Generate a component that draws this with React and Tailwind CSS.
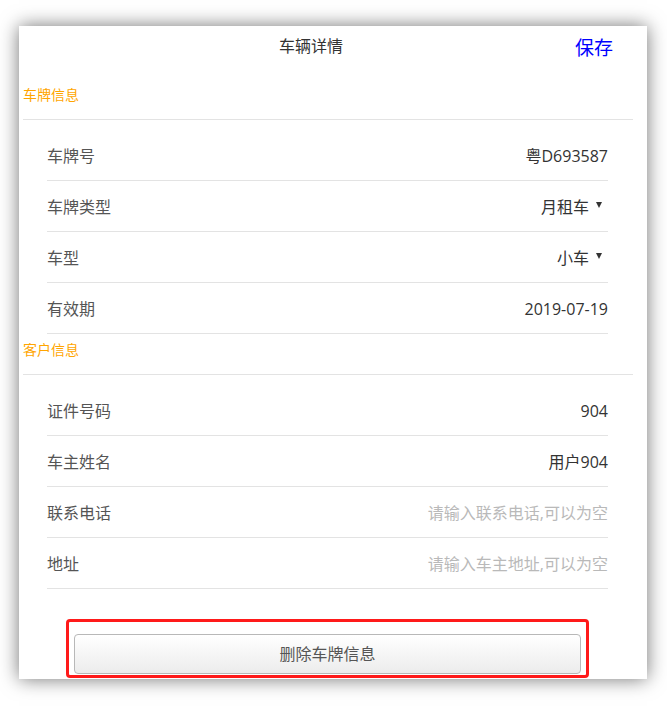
const plateRows = [
  { label: "车牌号", value: "粤D693587" },
  { label: "车牌类型", value: "月租车", select: true },
  { label: "车型", value: "小车", select: true },
  { label: "有效期", value: "2019-07-19" },
];

const ownerRows = [
  { label: "证件号码", value: "904" },
  { label: "车主姓名", value: "用户904" },
  { label: "联系电话", placeholder: "请输入联系电话,可以为空" },
  { label: "地址", placeholder: "请输入车主地址,可以为空" },
];

function Caret() {
  return (
    <svg width="6" height="6" viewBox="0 0 6 6" className="ml-[7px] mr-[6px] -mt-[4px]">
      <path d="M0 0H6L3 6Z" fill="#333" />
    </svg>
  );
}

function Row({ row }) {
  return (
    <div className="h-[51px] pt-[2px] flex items-center justify-between border-b border-[#e3e3e3] text-[16px] leading-[20px]">
      <span className="text-[#555]">{row.label}</span>
      {row.placeholder ? (
        <span className="text-[#b9b9b9]">{row.placeholder}</span>
      ) : (
        <span className="flex items-center text-[#333]">
          {row.value}
          {row.select && <Caret />}
        </span>
      )}
    </div>
  );
}

function Section({ title, rows }) {
  return (
    <div>
      <div className="ml-[4px] mr-[14px] pt-[6px] pb-[14px] border-b border-[#e3e3e3] text-[14px] leading-[20px] text-[#ffa500]">
        {title}
      </div>
      <div className="ml-[28px] mr-[39px] pt-[10px]">
        {rows.map((row) => (
          <Row key={row.label} row={row} />
        ))}
      </div>
    </div>
  );
}

export default function App() {
  return (
    <div
      className="w-[667px] h-[706px] bg-white pt-[26px] pl-[19px]"
      style={{ fontFamily: '"Open Sans", "Noto Sans CJK SC", sans-serif' }}
    >
      <div className="w-[628px] h-[653px] bg-white overflow-hidden shadow-[0_0_18px_rgba(0,0,0,0.55)]">
        {/* Title bar */}
        <div className="h-[53px] flex items-start pt-[10px]">
          <div className="flex-1 pl-[28px] text-center text-[16px] leading-[20px] text-[#333]">
            车辆详情
          </div>
          <button className="mr-[34px] mt-[1px] text-[19px] leading-[22px] text-[#0000ff]">保存</button>
        </div>

        <Section title="车牌信息" rows={plateRows} />
        <Section title="客户信息" rows={ownerRows} />

        {/* Delete button */}
        <div className="mt-[30px] ml-[47px] mr-[58px] border-[3px] border-[#ff1a1a] rounded-[4px] pt-[12px] px-[5px] pb-[1px]">
          <button className="w-full h-[40px] border border-[#b8b8b8] rounded-[4px] bg-gradient-to-b from-white to-[#ececec] text-[16px] text-[#555]">
            删除车牌信息
          </button>
        </div>
      </div>
    </div>
  );
}
